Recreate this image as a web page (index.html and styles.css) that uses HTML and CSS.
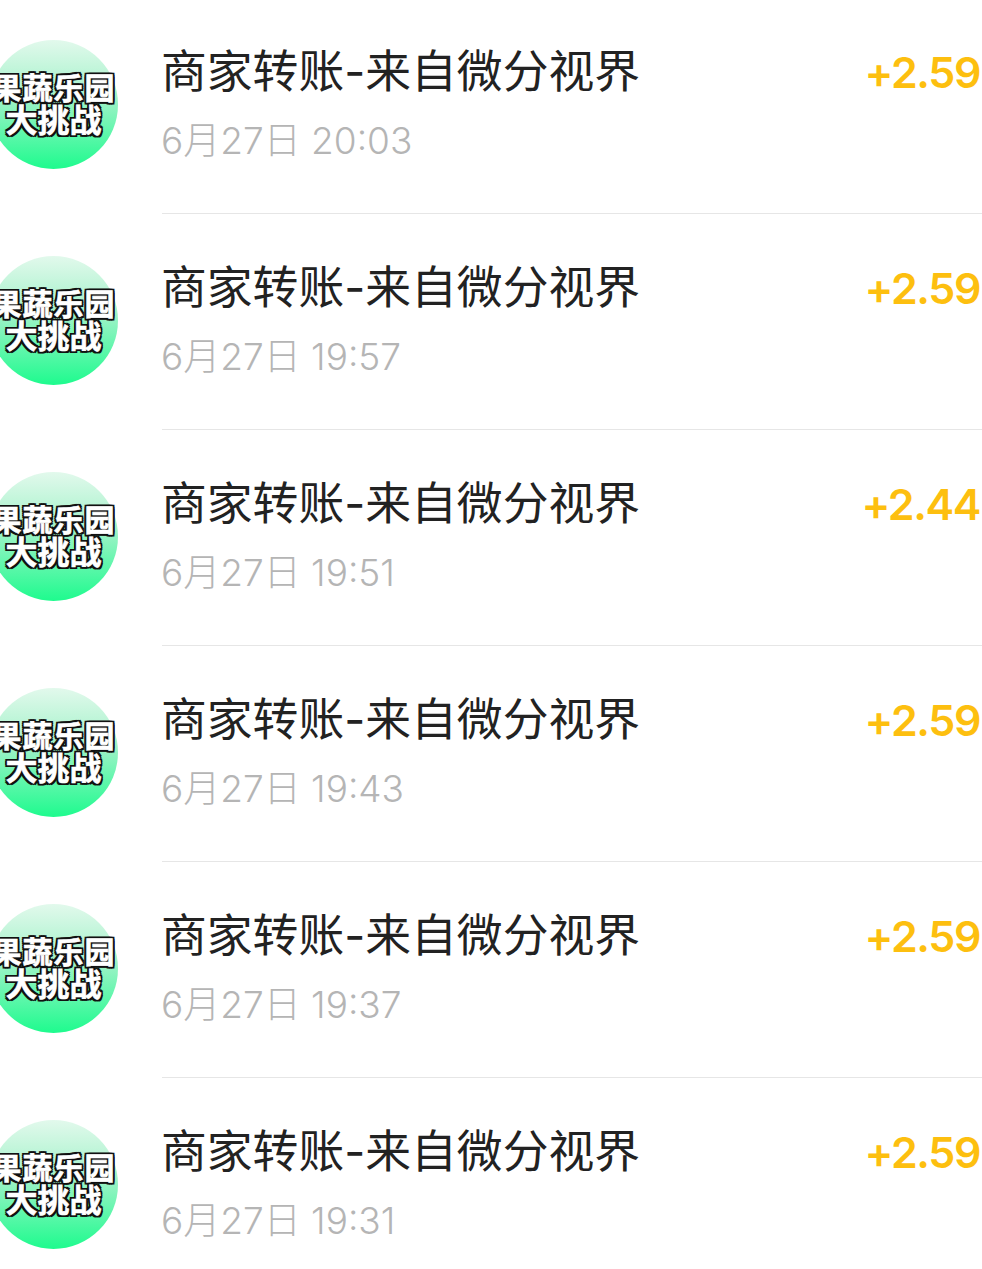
FILE: index.html
```html
<!DOCTYPE html>
<html lang="zh-CN">
<head>
    <meta charset="UTF-8">
    <title>账单</title>
    <link rel="stylesheet" href="styles.css">
</head>
<body>
<ul id="list">
    <li class="row">
        <div class="avatar"><span>果蔬乐园</span><span>大挑战</span></div>
        <div class="info">
            <div class="main">
                <p class="title">商家转账-来自微分视界</p>
                <p class="amount">+2.59</p>
            </div>
            <p class="date">6月27日 20:03</p>
        </div>
    </li>
    <li class="row">
        <div class="avatar"><span>果蔬乐园</span><span>大挑战</span></div>
        <div class="info">
            <div class="main">
                <p class="title">商家转账-来自微分视界</p>
                <p class="amount">+2.59</p>
            </div>
            <p class="date">6月27日 19:57</p>
        </div>
    </li>
    <li class="row">
        <div class="avatar"><span>果蔬乐园</span><span>大挑战</span></div>
        <div class="info">
            <div class="main">
                <p class="title">商家转账-来自微分视界</p>
                <p class="amount">+2.44</p>
            </div>
            <p class="date">6月27日 19:51</p>
        </div>
    </li>
    <li class="row">
        <div class="avatar"><span>果蔬乐园</span><span>大挑战</span></div>
        <div class="info">
            <div class="main">
                <p class="title">商家转账-来自微分视界</p>
                <p class="amount">+2.59</p>
            </div>
            <p class="date">6月27日 19:43</p>
        </div>
    </li>
    <li class="row">
        <div class="avatar"><span>果蔬乐园</span><span>大挑战</span></div>
        <div class="info">
            <div class="main">
                <p class="title">商家转账-来自微分视界</p>
                <p class="amount">+2.59</p>
            </div>
            <p class="date">6月27日 19:37</p>
        </div>
    </li>
    <li class="row">
        <div class="avatar"><span>果蔬乐园</span><span>大挑战</span></div>
        <div class="info">
            <div class="main">
                <p class="title">商家转账-来自微分视界</p>
                <p class="amount">+2.59</p>
            </div>
            <p class="date">6月27日 19:31</p>
        </div>
    </li>
</ul>
</body>
</html>
```
FILE: styles.css
```css
*{
    margin:0;
    padding:0;
    box-sizing:border-box;
}
html,body{
    height:1269px;
    overflow:hidden;
    background:#fff;
}
body{
    font-family:"Noto Sans CJK SC","Noto Sans",sans-serif;
}
ul{
    list-style:none;
}
#list{
    margin-top:-2px;
}
.row{
    display:flex;
    align-items:flex-start;
    height:216px;
    padding-top:42px;
}
.avatar{
    flex:none;
    width:129px;
    height:129px;
    margin-left:-11px;
    margin-right:44px;
    padding-bottom:6px;
    border-radius:50%;
    background:linear-gradient(#e2f9ec,#a0f2c8 45%,#1efb8e);
    display:flex;
    flex-direction:column;
    align-items:center;
    justify-content:center;
    font-weight:700;
    line-height:32px;
    color:#fff;
    white-space:nowrap;
    -webkit-text-stroke:0.6px #fff;
    text-shadow:2px 0 #111,-2px 0 #111,0 2px #111,0 -2px #111,2px 2px #111,-2px 2px #111,2px -2px #111,-2px -2px #111;
}
.avatar span{
    font-size:30px;
    letter-spacing:1px;
}
.avatar span + span{
    font-size:32px;
    letter-spacing:0;
}
.info{
    flex:1;
    height:174px;
    border-bottom:1px solid #e6e6e6;
}
.main{
    display:flex;
    justify-content:space-between;
    align-items:center;
    height:60px;
}
.title{
    font-family:"Inter","Noto Sans CJK SC",sans-serif;
    font-size:45.8px;
    line-height:56px;
    margin-top:3px;
    margin-left:-1px;
    color:#222;
}
.amount{
    font-family:"Inter","Noto Sans",sans-serif;
    font-size:43px;
    font-weight:600;
    letter-spacing:-1.4px;
    color:#fdbf0f;
    line-height:60px;
    margin-top:4px;
    margin-right:2px;
}
.date{
    margin-top:15px;
    margin-left:-1px;
    font-family:"Inter","Noto Sans CJK SC",sans-serif;
    font-size:37px;
    font-weight:300;
    line-height:52px;
    color:#b5b5b5;
}
```
